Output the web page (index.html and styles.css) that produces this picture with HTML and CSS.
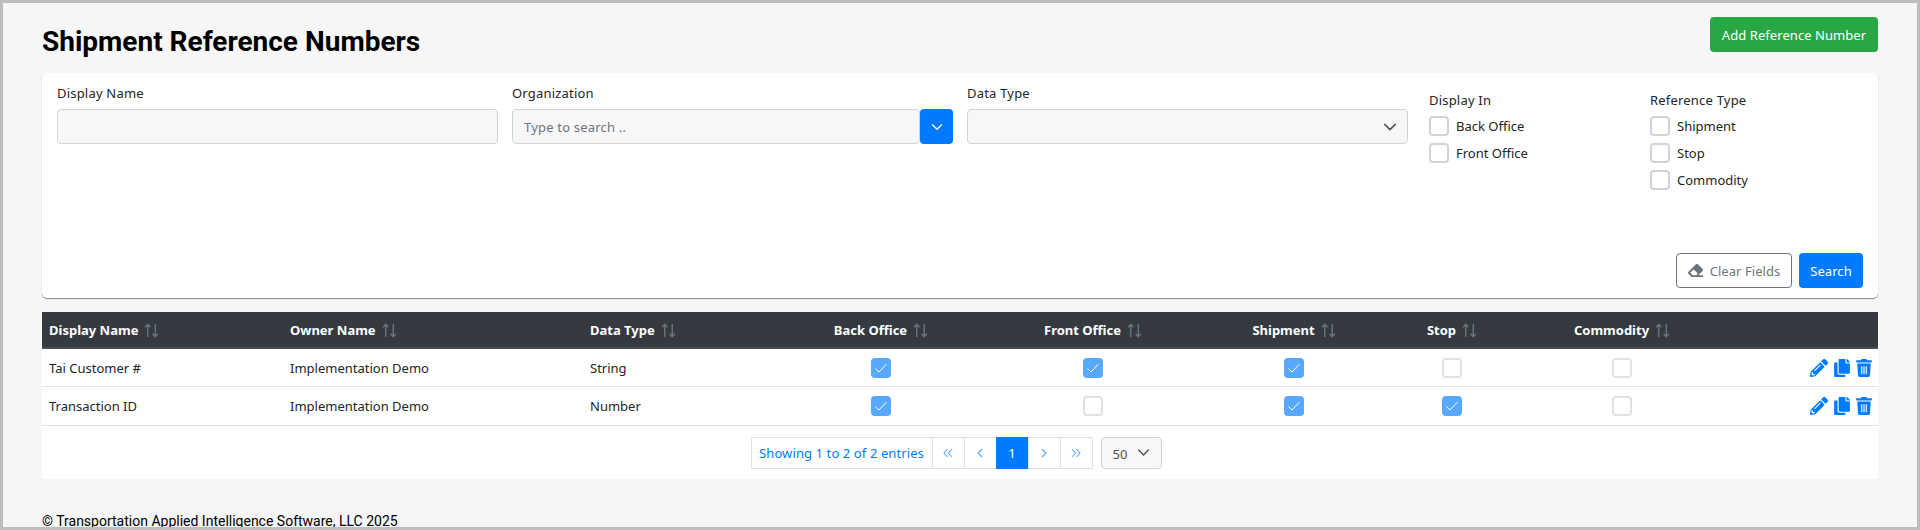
FILE: index.html
```html
<!DOCTYPE html>
<html lang="en">
<head>
<meta charset="utf-8">
<title>Shipment Reference Numbers</title>
<link rel="stylesheet" href="styles.css">
</head>
<body>
<svg class="defs" width="0" height="0" aria-hidden="true">
  <symbol id="sort" viewBox="0 0 14 14"><path d="M3.5 13V1.5M1 4 3.500 1.200 6 4M10.500 1v11.500M8 10l2.500 2.800L13 10" fill="none" stroke="currentColor" stroke-width="1.300"/></symbol>
  <symbol id="tick" viewBox="0 0 20 20"><path d="M4.500 10.500 8 14l7.500-8" fill="none" stroke="#fff" stroke-width="1"/></symbol>
  <symbol id="pen" viewBox="0 0 512 512"><path fill="currentColor" d="M497.900 142.100l-46.100 46.100c-4.700 4.700-12.300 4.700-17 0l-111-111c-4.700-4.700-4.700-12.300 0-17l46.100-46.100c18.700-18.700 49.100-18.700 67.900 0l60.100 60.100c18.800 18.700 18.800 49.100 0 67.900zM284.200 99.800L21.600 362.400.4 483.900c-2.900 16.400 11.400 30.600 27.800 27.800l121.500-21.300 262.600-262.600c4.700-4.700 4.700-12.300 0-17l-111-111c-4.800-4.700-12.400-4.700-17.100 0zM124.100 339.900c-5.500-5.500-5.500-14.300 0-19.800l154-154c5.500-5.500 14.300-5.500 19.800 0s5.500 14.300 0 19.800l-154 154c-5.500 5.500-14.300 5.500-19.800 0zM88 424h48v36.300l-64.500 11.300-31.100-31.100L51.700 376H88v48z"/></symbol>
  <symbol id="copy" viewBox="0 0 448 512"><path fill="currentColor" d="M320 448v40c0 13.300-10.700 24-24 24H24c-13.300 0-24-10.700-24-24V120c0-13.300 10.700-24 24-24h72v296c0 30.900 25.100 56 56 56h168zm0-344V0H152c-13.300 0-24 10.700-24 24v368c0 13.300 10.700 24 24 24h272c13.300 0 24-10.700 24-24V128H344c-13.200 0-24-10.800-24-24zm121-31L375 7c-4.500-4.500-10.600-7-17-7h-6v96h96v-6.100c0-6.400-2.500-12.500-7-17z"/></symbol>
  <symbol id="trash" viewBox="0 0 448 512"><path fill="currentColor" d="M432 32H312l-9.400-18.700A24 24 0 0 0 281.100 0H166.800a23.700 23.700 0 0 0-21.400 13.300L136 32H16A16 16 0 0 0 0 48v32a16 16 0 0 0 16 16h416a16 16 0 0 0 16-16V48a16 16 0 0 0-16-16zM53.200 467a48 48 0 0 0 47.900 45h245.800a48 48 0 0 0 47.900-45L416 128H32zM144 208h32v224h-32zm64 0h32v224h-32zm64 0h32v224h-32z"/></symbol>
  <symbol id="eraser" viewBox="0 0 512 512"><path fill="currentColor" d="M497.900 273.900c18.700-18.700 18.700-49.100 0-67.900l-160-160c-18.700-18.700-49.100-18.700-67.900 0l-256 256c-18.700 18.700-18.700 49.100 0 67.900l96 96A48 48 0 0 0 144 480h356c6.600 0 12-5.400 12-12v-40c0-6.600-5.400-12-12-12H355.900l142-142.100zM195.900 221.900l137.400 137.400L276.700 416H155.900l-80-80z"/></symbol>
  <symbol id="chev" viewBox="0 0 16 16"><path d="M2 5l6 6 6-6" fill="none" stroke="currentColor" stroke-width="1.700" stroke-linecap="round" stroke-linejoin="round"/></symbol>
  <symbol id="first" viewBox="0 0 10 10"><path d="M4.500 1 1 5l3.500 4M9 1 5.500 5 9 9" fill="none" stroke="currentColor" stroke-width="1.100"/></symbol>
  <symbol id="prev" viewBox="0 0 10 10"><path d="M7 1 3 5l4 4" fill="none" stroke="currentColor" stroke-width="1.200"/></symbol>
  <symbol id="next" viewBox="0 0 10 10"><path d="M3 1l4 4-4 4" fill="none" stroke="currentColor" stroke-width="1.200"/></symbol>
  <symbol id="last" viewBox="0 0 10 10"><path d="M1 1l3.500 4L1 9M5.500 1 9 5 5.500 9" fill="none" stroke="currentColor" stroke-width="1.100"/></symbol>
</svg>

<div class="page">
  <header class="top">
    <h1 class="title">Shipment Reference Numbers</h1>
    <button class="btn btn-green" type="button">Add Reference Number</button>
  </header>

  <section class="card">
    <div class="filters">
      <div class="field">
        <label class="lbl">Display Name</label>
        <input class="ctl" type="text">
      </div>
      <div class="field">
        <label class="lbl">Organization</label>
        <div class="combo">
          <input class="ctl combo-input" type="text" placeholder="Type to search ..">
          <button class="combo-btn" type="button" aria-label="Open"><svg class="combo-chev"><use href="#chev"/></svg></button>
        </div>
      </div>
      <div class="field">
        <label class="lbl">Data Type</label>
        <div class="ctl select"><svg class="select-chev"><use href="#chev"/></svg></div>
      </div>
      <div class="checks checks-display">
        <div class="lbl lbl-checks">Display In</div>
        <label class="chk"><span class="box"></span>Back Office</label>
        <label class="chk"><span class="box"></span>Front Office</label>
      </div>
      <div class="checks">
        <div class="lbl lbl-checks">Reference Type</div>
        <label class="chk"><span class="box"></span>Shipment</label>
        <label class="chk"><span class="box"></span>Stop</label>
        <label class="chk"><span class="box"></span>Commodity</label>
      </div>
    </div>
    <div class="actions">
      <button class="btn btn-outline" type="button"><svg class="eraser"><use href="#eraser"/></svg>Clear Fields</button>
      <button class="btn btn-blue" type="button">Search</button>
    </div>
  </section>

  <section class="panel">
    <table class="grid">
      <colgroup>
        <col class="c1"><col class="c2"><col class="c3"><col class="c4"><col class="c5"><col class="c6"><col class="c7"><col class="c8"><col class="c9">
      </colgroup>
      <thead>
        <tr>
          <th>Display Name<svg class="sort"><use href="#sort"/></svg></th>
          <th>Owner Name<svg class="sort"><use href="#sort"/></svg></th>
          <th>Data Type<svg class="sort"><use href="#sort"/></svg></th>
          <th class="ctr">Back Office<svg class="sort"><use href="#sort"/></svg></th>
          <th class="ctr">Front Office<svg class="sort"><use href="#sort"/></svg></th>
          <th class="ctr">Shipment<svg class="sort"><use href="#sort"/></svg></th>
          <th class="ctr">Stop<svg class="sort"><use href="#sort"/></svg></th>
          <th class="ctr">Commodity<svg class="sort"><use href="#sort"/></svg></th>
          <th></th>
        </tr>
      </thead>
      <tbody>
        <tr>
          <td>Tai Customer #</td>
          <td>Implementation Demo</td>
          <td>String</td>
          <td class="ctr"><span class="tb on"><svg class="tick"><use href="#tick"/></svg></span></td>
          <td class="ctr"><span class="tb on"><svg class="tick"><use href="#tick"/></svg></span></td>
          <td class="ctr"><span class="tb on"><svg class="tick"><use href="#tick"/></svg></span></td>
          <td class="ctr"><span class="tb"></span></td>
          <td class="ctr"><span class="tb"></span></td>
          <td class="acts"><svg class="i-pen"><use href="#pen"/></svg><svg class="i-copy"><use href="#copy"/></svg><svg class="i-trash"><use href="#trash"/></svg></td>
        </tr>
        <tr>
          <td>Transaction ID</td>
          <td>Implementation Demo</td>
          <td>Number</td>
          <td class="ctr"><span class="tb on"><svg class="tick"><use href="#tick"/></svg></span></td>
          <td class="ctr"><span class="tb"></span></td>
          <td class="ctr"><span class="tb on"><svg class="tick"><use href="#tick"/></svg></span></td>
          <td class="ctr"><span class="tb on"><svg class="tick"><use href="#tick"/></svg></span></td>
          <td class="ctr"><span class="tb"></span></td>
          <td class="acts"><svg class="i-pen"><use href="#pen"/></svg><svg class="i-copy"><use href="#copy"/></svg><svg class="i-trash"><use href="#trash"/></svg></td>
        </tr>
      </tbody>
    </table>
    <nav class="pager">
      <ul class="pages">
        <li class="pg pg-info">Showing 1 to 2 of 2 entries</li>
        <li class="pg pg-nav"><svg class="pg-ico"><use href="#first"/></svg></li>
        <li class="pg pg-nav"><svg class="pg-ico"><use href="#prev"/></svg></li>
        <li class="pg pg-active">1</li>
        <li class="pg pg-nav"><svg class="pg-ico"><use href="#next"/></svg></li>
        <li class="pg pg-nav"><svg class="pg-ico"><use href="#last"/></svg></li>
      </ul>
      <div class="size"><span class="size-val">50</span><svg class="size-chev"><use href="#chev"/></svg></div>
    </nav>
  </section>

  <footer class="foot">© Transportation Applied Intelligence Software, LLC 2025</footer>
</div>
</body>
</html>
```
FILE: styles.css
```css
* { box-sizing: border-box; }
html, body { margin: 0; height: 100%; overflow: hidden; }
body { font-family: "Noto Sans", sans-serif; font-size: 13px; color: #212529; background: #bdbdbd; padding: 3px; }
.defs { position: absolute; }
.page { height: 524px; background: #f6f6f6; padding: 0 39px; overflow: hidden; position: relative; }

.top { display: flex; justify-content: space-between; height: 70px; padding-top: 14px; }
.title { margin: -2px 0 0; font: 700 28px/54px Roboto, sans-serif; color: #000; height: 54px; }
.btn { height: 35px; border-radius: 4px; font: 13px "Noto Sans", sans-serif; letter-spacing: .06px; padding: 0; border: 0; cursor: pointer; }
.btn-green { width: 168px; background: #28a745; color: #fff; }
.btn-blue { width: 64px; background: #007bff; color: #fff; }
.btn-outline { width: 116px; background: #fff; color: #6c757d; border: 1px solid #6c757d; display: inline-flex; align-items: center; justify-content: center; }

.card { height: 225px; background: #fff; border-radius: 5px; box-shadow: 0 1px 1px rgba(0,0,0,.45); padding: 0 15px 10px; display: flex; flex-direction: column; justify-content: space-between; }
.filters { display: grid; grid-template-columns: 441px 441px 441px 214px 1fr; column-gap: 14px; }
.lbl { display: block; height: 36px; line-height: 20px; padding-top: 10px; color: #212529; letter-spacing: .2px; }
.ctl { display: block; width: 100%; height: 35px; background: #f7f7f7; border: 1px solid #ced4da; border-radius: 4px; font: 13px "Noto Sans", sans-serif; letter-spacing: .2px; padding: 0 11px; outline: 0; }
.ctl::placeholder { color: #6c757d; opacity: 1; }
.combo { display: flex; }
.combo-input { flex: 1; min-width: 0; }
.combo-btn { width: 33px; height: 35px; flex: none; background: #007bff; border: 0; border-radius: 4px; color: #fff; padding: 0; display: flex; align-items: center; justify-content: center; }
.combo-chev { width: 12px; height: 12px; }
.select { display: flex; align-items: center; justify-content: flex-end; padding-right: 10px; color: #495057; }
.select-chev { width: 14px; height: 14px; }
.checks { padding-top: 17px; }
.checks-display { padding-left: 7px; }
.lbl-checks { height: auto; padding: 0; line-height: 20px; margin-bottom: 6px; }
.chk { display: flex; align-items: center; height: 20px; margin-bottom: 7px; gap: 7px; }
.box { width: 20px; height: 20px; border: 2px solid #ced4da; border-radius: 4px; background: #fff; }

.actions { display: flex; justify-content: flex-end; gap: 7px; }
.eraser { width: 15px; height: 15px; margin-right: 7px; }

.panel { margin-top: 14px; height: 167px; background: #fff; }
.grid { width: 100%; table-layout: fixed; border-collapse: collapse; }
.c1 { width: 241px; } .c2 { width: 300px; } .c3 { width: 177px; } .c4 { width: 242px; } .c5 { width: 182px; }
.c6 { width: 220px; } .c7 { width: 96px; } .c8 { width: 244px; } .c9 { width: 134px; }
.grid th { height: 36px; background: #343a40; border-bottom: 2px solid #454d55; color: #fff; font-weight: 700; text-align: left; padding: 0 7px; white-space: nowrap; }
.grid td { height: 38.500px; border-bottom: 1px solid #dee2e6; padding: 0 7px; }
.grid .ctr { text-align: center; }
.sort { width: 15px; height: 15px; margin-left: 6px; vertical-align: -3px; color: #6c757d; }
.tb { display: inline-block; width: 20px; height: 20px; border: 2px solid #dee2e6; border-radius: 4px; vertical-align: middle; }
.tb.on { background: #59a8ff; border-color: #59a8ff; position: relative; }
.tick { position: absolute; left: -2px; top: -2px; width: 20px; height: 20px; }
.acts { color: #007bff; text-align: right; white-space: nowrap; font-size: 0; }
.acts.acts { padding-right: 6px; }
.acts svg { height: 18px; vertical-align: middle; margin-left: 6px; }
.i-pen { width: 18px; } .i-copy { width: 16px; } .i-trash { width: 16px; }

.pager { display: flex; justify-content: center; gap: 8px; padding: 11px 8px 0 0; }
.pages { display: flex; list-style: none; margin: 0; padding: 0; }
.pg { height: 32px; border: 1px solid #dee2e6; margin-left: -1px; display: flex; align-items: center; justify-content: center; background: #fff; color: #007bff; letter-spacing: .1px; }
.pg-info { width: 182px; margin-left: 0; }
.pg-nav, .pg-active { width: 33px; }
.pg-nav { color: #5aa9ff; }
.pg-ico { width: 10px; height: 10px; }
.pg-active { background: #007bff; border-color: #007bff; color: #fff; }
.size { width: 61px; height: 32px; background: #f7f7f7; border: 1px solid #ced4da; border-radius: 4px; display: flex; align-items: center; padding-left: 11px; gap: 10px; color: #495057; }
.size-val { padding-top: 3px; }
.size-chev { width: 13px; height: 13px; }

.foot { position: absolute; left: 39px; top: 510px; font: 14px/16px Roboto, sans-serif; color: #000; white-space: nowrap; }
```
